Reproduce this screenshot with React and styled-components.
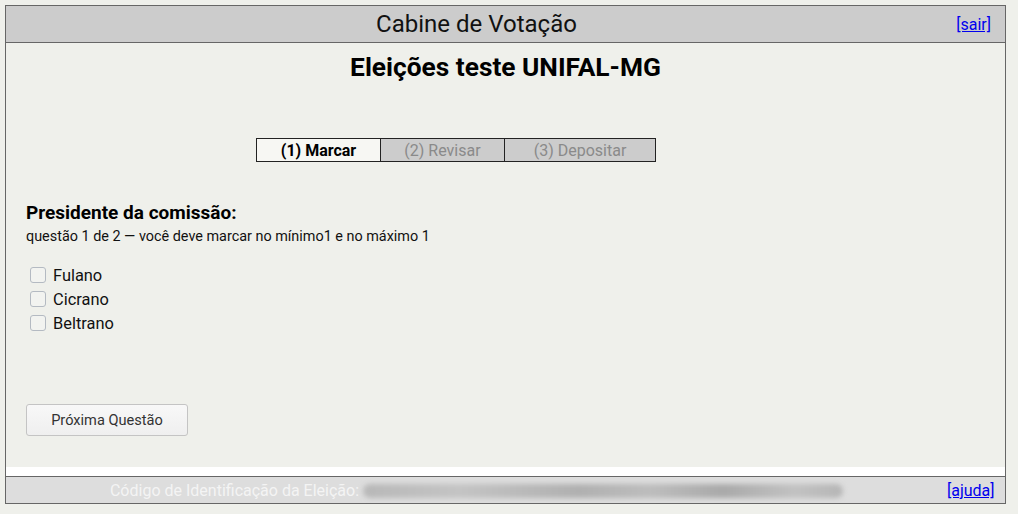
import React from "react";
import styled, { createGlobalStyle } from "styled-components";

const Global = createGlobalStyle`
  html, body { margin: 0; padding: 0; background: #eff0eb; }
  body { font-family: Roboto, "Liberation Sans", Arial, sans-serif; color: #111; }
`;

const Frame = styled.div`
  margin: 5px;
  width: 999px;
  border: 1px solid #666;
  background: #eff0eb;
  display: flex;
  flex-direction: column;
`;

const Bar = styled.div`
  display: flex;
  align-items: center;
  background: ${(p) => p.$bg};
  height: ${(p) => p.$h}px;
  ${(p) => (p.$top ? "border-top: 1px solid #666;" : "border-bottom: 1px solid #666;")}
`;

const BarMain = styled.div`
  flex: 1;
  text-align: center;
  font-size: ${(p) => p.$size}px;
  color: ${(p) => p.$color};
  white-space: nowrap;
`;

const BarSide = styled.div`
  width: 58px;
  text-align: right;
  padding-right: 14px;
  box-sizing: border-box;
  font-size: 16px;
`;

const Link = styled.a`
  color: #0000ee;
  text-decoration: underline;
  cursor: pointer;
`;

const Content = styled.div`
  height: 424px;
  box-sizing: border-box;
  padding: 8px 20px 0 20px;
  display: flex;
  flex-direction: column;
`;

const Title = styled.h1`
  margin: 0;
  text-align: center;
  font-size: 26.3px;
  font-weight: 700;
  line-height: 32px;
  color: #000;
`;

const Steps = styled.div`
  margin: 55px 0 0 230px;
  align-self: flex-start;
  display: flex;
  border: 1px solid #222;
  height: 22px;
`;

const Step = styled.div`
  width: ${(p) => p.$w}px;
  display: flex;
  align-items: center;
  justify-content: center;
  font-size: 16px;
  background: ${(p) => (p.$active ? "#f7f7f3" : "#cccccc")};
  color: ${(p) => (p.$active ? "#000" : "#8a8a8a")};
  font-weight: ${(p) => (p.$active ? 700 : 400)};
  & + & { border-left: 1px solid #222; }
`;

const Question = styled.div`
  margin-top: 40px;
`;

const QTitle = styled.h2`
  margin: 0;
  font-size: 19px;
  font-weight: 700;
  line-height: 22px;
  color: #000;
`;

const QInfo = styled.div`
  font-size: 14.4px;
  line-height: 22px;
  margin-top: 2px;
  margin-bottom: 15px;
`;

const Option = styled.label`
  display: flex;
  align-items: center;
  height: 24px;
  font-size: 16.4px;
  padding-left: 4px;
  gap: 7px;
`;

const Box = styled.span`
  width: 14px;
  height: 14px;
  border: 1px solid #b4bac2;
  border-radius: 3px;
  background: #f2f3f0;
  display: inline-block;
`;

const Button = styled.button`
  margin-top: 69px;
  align-self: flex-start;
  width: 162px;
  height: 32px;
  font-family: inherit;
  font-size: 14.6px;
  color: #333;
  background: linear-gradient(#f8f8f8, #efefef);
  border: 1px solid #c4c4c4;
  border-radius: 3px;
`;

const Strip = styled.div`
  height: 9px;
  background: #ffffff;
`;

const Redacted = styled.span`
  display: inline-block;
  vertical-align: middle;
  width: 480px;
  height: 14px;
  margin-left: 4px;
  border-radius: 7px;
  background: linear-gradient(90deg, #b8b8b8 0%, #c4c4c4 20%, #b0b0b0 45%, #bdbdbd 60%, #a9a9a9 75%, #c2c2c2 90%, #b6b6b6 100%);
  filter: blur(2.5px);
`;

export default function App() {
  const options = ["Fulano", "Cicrano", "Beltrano"];
  return (
    <>
      <Global />
      <Frame>
        <Bar $bg="#cccccc" $h={36}>
          <BarMain $size={24} $color="#111">Cabine de Votação</BarMain>
          <BarSide><Link>[sair]</Link></BarSide>
        </Bar>
        <Content>
          <Title>Eleições teste UNIFAL-MG</Title>
          <Steps>
            <Step $w={123} $active>(1) Marcar</Step>
            <Step $w={123}>(2) Revisar</Step>
            <Step $w={150}>(3) Depositar</Step>
          </Steps>
          <Question>
            <QTitle>Presidente da comissão:</QTitle>
            <QInfo>questão 1 de 2 — você deve marcar no mínimo1 e no máximo 1</QInfo>
            {options.map((o) => (
              <Option key={o}>
                <Box />
                {o}
              </Option>
            ))}
          </Question>
          <Button>Próxima Questão</Button>
        </Content>
        <Strip />
        <Bar $bg="#dddddd" $h={26} $top>
          <BarMain $size={16} $color="#f4f4f4">
            Código de Identificação da Eleição:<Redacted />
          </BarMain>
          <BarSide><Link>[ajuda]</Link></BarSide>
        </Bar>
      </Frame>
    </>
  );
}
